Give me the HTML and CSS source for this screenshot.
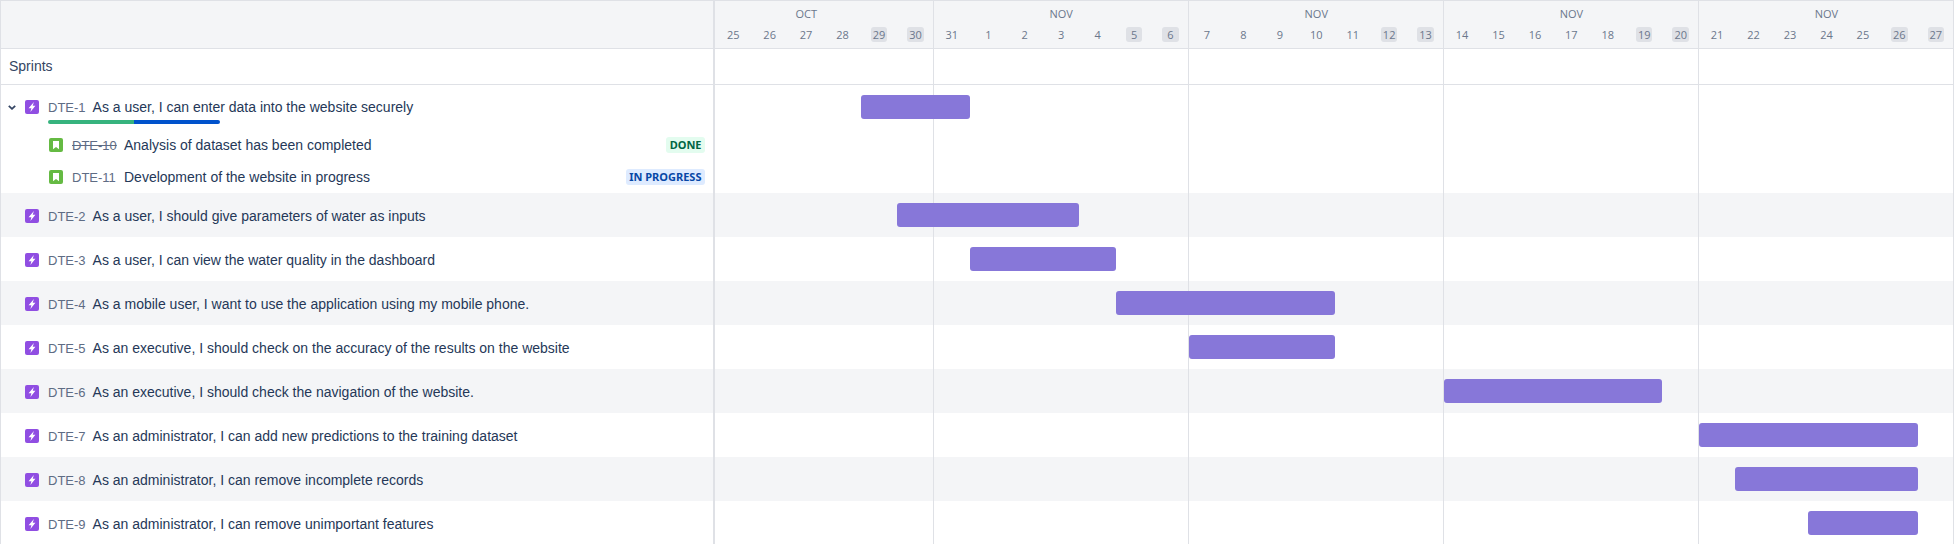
FILE: index.html
```html
<!DOCTYPE html>
<html lang="en">
<head>
  <meta charset="UTF-8">
  <meta name="viewport" content="width=device-width, initial-scale=1.0">
  <title>Roadmap</title>
  <link rel="stylesheet" href="styles.css">
</head>
<body>
  <svg class="defs" width="0" height="0">
    <symbol id="epic" viewBox="0 0 14 14">
      <rect width="14" height="14" rx="2" fill="#904ee2"/>
      <path d="M8.9 2 3.6 8.2h2.8l-1 3.8 5-6.2H7.7z" fill="#fff"/>
    </symbol>
    <symbol id="story" viewBox="0 0 14 14">
      <rect width="14" height="14" rx="2" fill="#65ba43"/>
      <path d="M4 3h6v8.2L7 9 4 11.2z" fill="#fff"/>
    </symbol>
  </svg>

  <div class="gantt">
    <div class="lines">
      <i></i><i></i><i></i><i></i><i></i>
    </div>

    <div class="row head">
      <div class="side"></div>
      <div class="calendar">
        <div class="months">
          <span class="m6">OCT</span>
          <span class="m7">NOV</span>
          <span class="m7">NOV</span>
          <span class="m7">NOV</span>
          <span class="m7">NOV</span>
        </div>
        <div class="days">
          <span>25</span><span>26</span><span>27</span><span>28</span><span class="off">29</span><span class="off">30</span>
          <span>31</span><span>1</span><span>2</span><span>3</span><span>4</span><span class="off">5</span><span class="off">6</span>
          <span>7</span><span>8</span><span>9</span><span>10</span><span>11</span><span class="off">12</span><span class="off">13</span>
          <span>14</span><span>15</span><span>16</span><span>17</span><span>18</span><span class="off">19</span><span class="off">20</span>
          <span>21</span><span>22</span><span>23</span><span>24</span><span>25</span><span class="off">26</span><span class="off">27</span>
        </div>
      </div>
    </div>

    <div class="row sprints">
      <div class="side">Sprints</div>
      <div class="track"></div>
    </div>

    <!-- epic with children -->
    <div class="row parent">
      <div class="side">
        <div class="issue first">
          <svg class="chevron" viewBox="0 0 8 5"><path d="M.8.8 4 3.8 7.2.8" fill="none" stroke="#344563" stroke-width="1.8"/></svg>
          <svg class="icon"><use href="#epic"/></svg>
          <span class="key">DTE-1</span>
          <span>As a user, I can enter data into the website securely</span>
          <div class="progress"><b></b><b></b></div>
        </div>
        <div class="issue child">
          <svg class="icon"><use href="#story"/></svg>
          <span class="key done">DTE-10</span>
          <span>Analysis of dataset has been completed</span>
          <span class="badge green">DONE</span>
        </div>
        <div class="issue child">
          <svg class="icon"><use href="#story"/></svg>
          <span class="key">DTE-11</span>
          <span>Development of the website in progress</span>
          <span class="badge blue">IN PROGRESS</span>
        </div>
      </div>
      <div class="track"><div class="bar" style="grid-column: 5 / 8"></div></div>
    </div>

    <div class="row item grey">
      <div class="side"><svg class="icon"><use href="#epic"/></svg><span class="key">DTE-2</span><span>As a user, I should give parameters of water as inputs</span></div>
      <div class="track"><div class="bar" style="grid-column: 6 / 11"></div></div>
    </div>
    <div class="row item">
      <div class="side"><svg class="icon"><use href="#epic"/></svg><span class="key">DTE-3</span><span>As a user, I can view the water quality in the dashboard</span></div>
      <div class="track"><div class="bar" style="grid-column: 8 / 12"></div></div>
    </div>
    <div class="row item grey">
      <div class="side"><svg class="icon"><use href="#epic"/></svg><span class="key">DTE-4</span><span>As a mobile user, I want to use the application using my mobile phone.</span></div>
      <div class="track"><div class="bar" style="grid-column: 12 / 18"></div></div>
    </div>
    <div class="row item">
      <div class="side"><svg class="icon"><use href="#epic"/></svg><span class="key">DTE-5</span><span>As an executive, I should check on the accuracy of the results on the website</span></div>
      <div class="track"><div class="bar" style="grid-column: 14 / 18"></div></div>
    </div>
    <div class="row item grey">
      <div class="side"><svg class="icon"><use href="#epic"/></svg><span class="key">DTE-6</span><span>As an executive, I should check the navigation of the website.</span></div>
      <div class="track"><div class="bar" style="grid-column: 21 / 27"></div></div>
    </div>
    <div class="row item">
      <div class="side"><svg class="icon"><use href="#epic"/></svg><span class="key">DTE-7</span><span>As an administrator, I can add new predictions to the training dataset</span></div>
      <div class="track"><div class="bar" style="grid-column: 28 / 34"></div></div>
    </div>
    <div class="row item grey">
      <div class="side"><svg class="icon"><use href="#epic"/></svg><span class="key">DTE-8</span><span>As an administrator, I can remove incomplete records</span></div>
      <div class="track"><div class="bar" style="grid-column: 29 / 34"></div></div>
    </div>
    <div class="row item">
      <div class="side"><svg class="icon"><use href="#epic"/></svg><span class="key">DTE-9</span><span>As an administrator, I can remove unimportant features</span></div>
      <div class="track"><div class="bar" style="grid-column: 31 / 34"></div></div>
    </div>
  </div>
</body>
</html>
```

FILE: styles.css
```css
/* General Styles */
body {
  margin: 0;
  overflow: hidden;
  background-color: #fff;
  font-family: "Liberation Sans", Arial, sans-serif;
  font-size: 14px;
  color: #253858;
}

.defs {
  position: absolute;
}

.gantt {
  position: relative;
  height: 544px;
  overflow: hidden;
  border: 1px solid #dfe1e6;
  border-bottom: none;
  box-sizing: border-box;
}

.row {
  display: grid;
  grid-template-columns: 714px 1239px;
  box-sizing: border-box;
}

.side {
  box-sizing: border-box;
  border-right: 2px solid #dfe1e6;
  min-width: 0;
}

.track {
  display: grid;
  grid-template-columns: repeat(34, 1fr);
  position: relative;
  z-index: 1;
}

/* Week lines run under the bars */
.lines {
  position: absolute;
  top: 0;
  bottom: 0;
  left: 713px;
  width: 1239px;
  display: grid;
  grid-template-columns: 6fr 7fr 7fr 7fr 7fr;
}

.lines i + i {
  border-left: 1px solid #dfe1e6;
}

/* Calendar header */
.head {
  height: 48px;
  background-color: #f4f5f7;
  border-bottom: 1px solid #dfe1e6;
}

.months {
  display: grid;
  grid-template-columns: 6fr 7fr 7fr 7fr 7fr;
  height: 21px;
  padding-top: 5px;
  box-sizing: border-box;
  font-family: "Open Sans", sans-serif;
  font-size: 11px;
  line-height: 16px;
  color: #6b778c;
  text-align: center;
}

/* Oct is centred over a full week, one day of it hidden by the panel */
.m6 {
  padding-right: 36px;
}

.days {
  display: grid;
  grid-template-columns: repeat(34, 1fr);
  font-family: "Open Sans", sans-serif;
  font-size: 11px;
  color: #6b778c;
  text-align: center;
}

.days span {
  height: 15px;
  line-height: 16px;
  margin: 5px 10px 0;
  border-radius: 3px;
}

.days .off {
  background-color: #dfe1e6;
}

/* Rows */
.sprints {
  height: 36px;
  border-bottom: 1px solid #dfe1e6;
}

.sprints .side {
  padding: 0 8px;
  line-height: 35px;
  color: #344563;
}

.parent {
  height: 108px;
}

.item {
  height: 44px;
}

.item .side {
  display: flex;
  align-items: center;
  padding: 2px 0 0 24px;
}

.grey {
  background-color: #f4f5f7;
}

.issue {
  position: relative;
  display: flex;
  align-items: center;
}

.first {
  height: 44px;
  padding-left: 7px;
}

.child {
  height: 32px;
  padding: 0 8px 0 48px;
}

.chevron {
  flex: none;
  width: 8px;
  height: 5px;
  margin-right: 9px;
}

.icon {
  flex: none;
  width: 14px;
  height: 14px;
  margin-right: 9px;
}

.key {
  font-size: 13px;
  color: #5e6c84;
  margin-right: 7px;
}

.child .key {
  min-width: 45px;
}

.done {
  text-decoration: line-through;
}

.progress {
  position: absolute;
  left: 47px;
  top: 35px;
  width: 172px;
  height: 4px;
  display: flex;
  border-radius: 2px;
  overflow: hidden;
}

.progress b {
  flex: 1;
}

.progress b:first-child {
  background-color: #36b37e;
}

.progress b:last-child {
  background-color: #0052cc;
}

.badge {
  margin-left: auto;
  padding: 0 3.5px;
  border-radius: 3px;
  font-family: "Noto Sans", sans-serif;
  font-size: 11px;
  font-weight: 700;
  line-height: 16px;
}

.green {
  background-color: #e3fcef;
  color: #006644;
}

.blue {
  background-color: #deebff;
  color: #0747a6;
}

.bar {
  height: 24px;
  margin-top: 10px;
  border-radius: 3px;
  background-color: #8777d9;
}
```
